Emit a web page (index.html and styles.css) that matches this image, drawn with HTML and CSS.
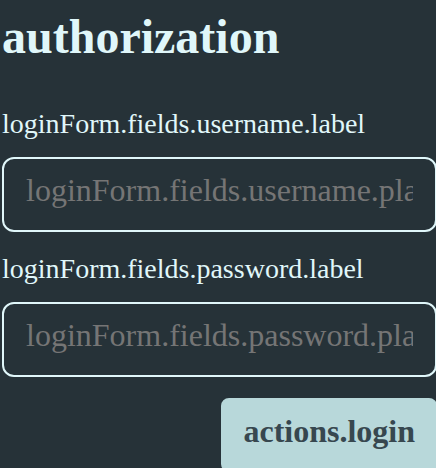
FILE: index.html
```html
<!DOCTYPE html>
<html lang="en">
<head>
<meta charset="utf-8">
<title>authorization</title>
<link rel="stylesheet" href="styles.css">
</head>
<body>
<main class="page">
  <h1 class="title">authorization</h1>
  <form class="form">
    <label class="field">
      <span class="field-label">loginForm.fields.username.label</span>
      <input class="field-input" type="text" placeholder="loginForm.fields.username.placeholder">
    </label>
    <label class="field">
      <span class="field-label">loginForm.fields.password.label</span>
      <input class="field-input" type="password" placeholder="loginForm.fields.password.placeholder">
    </label>
    <div class="actions">
      <button class="btn" type="button">actions.login</button>
    </div>
  </form>
</main>
</body>
</html>
```
FILE: styles.css
```css
html, body {
  margin: 0;
  padding: 0;
  background: #263238;
  overflow: hidden;
}
.page {
  padding: 0 0 0 2px;
  width: 435px;
  font-family: "Liberation Serif", serif;
  color: #e0f7fa;
}
.title {
  margin: 0;
  padding-top: 9px;
  font-size: 48px;
  line-height: 55px;
  font-weight: bold;
  color: #e0f7fa;
}
.form {
  display: flex;
  flex-direction: column;
  gap: 21px;
  margin-top: 44px;
}
.field {
  display: flex;
  flex-direction: column;
  gap: 17px;
}
.field-label {
  font-size: 28px;
  line-height: 32px;
}
.field-input {
  box-sizing: border-box;
  width: 100%;
  height: 75px;
  margin: 0;
  padding: 0 22px 8px 22px;
  border: 2px solid #e0f7fa;
  border-radius: 12px;
  background: transparent;
  color: #e0f7fa;
  font-family: "Liberation Serif", serif;
  font-size: 32px;
  outline: none;
}
.field-input::placeholder {
  color: #757575;
  opacity: 1;
}
.actions {
  display: flex;
  justify-content: flex-end;
}
.btn {
  box-sizing: border-box;
  padding: 15px 22px 22px 22px;
  border: none;
  border-radius: 8px;
  background: #b8d8da;
  color: #37474f;
  font-family: "Liberation Serif", serif;
  font-size: 32px;
  font-weight: bold;
  line-height: normal;
  cursor: pointer;
}
```
